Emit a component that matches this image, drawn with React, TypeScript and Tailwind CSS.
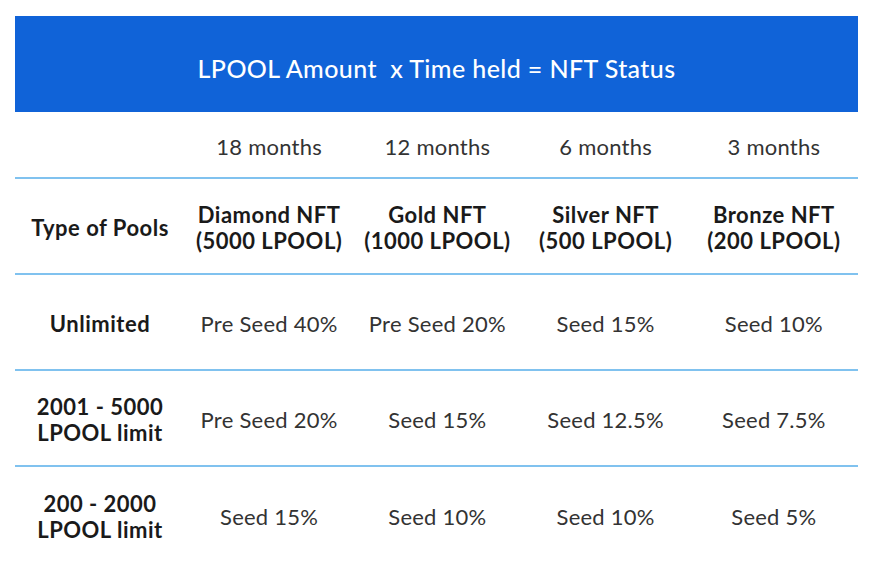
const months = ['18 months', '12 months', '6 months', '3 months'];

const tiers = [
  ['Diamond NFT', '(5000 LPOOL)'],
  ['Gold NFT', '(1000 LPOOL)'],
  ['Silver NFT', '(500 LPOOL)'],
  ['Bronze NFT', '(200 LPOOL)'],
];

const pools: { label: string[]; values: string[] }[] = [
  { label: ['Unlimited'], values: ['Pre Seed 40%', 'Pre Seed 20%', 'Seed 15%', 'Seed 10%'] },
  { label: ['2001 - 5000', 'LPOOL limit'], values: ['Pre Seed 20%', 'Seed 15%', 'Seed 12.5%', 'Seed 7.5%'] },
  { label: ['200 - 2000', 'LPOOL limit'], values: ['Seed 15%', 'Seed 10%', 'Seed 10%', 'Seed 5%'] },
];

function Row({ children, className = '' }: { children: React.ReactNode; className?: string }) {
  return (
    <div className={`grid grid-cols-[170px_repeat(4,1fr)] items-center text-center pt-[3px] ${className}`}>
      {children}
    </div>
  );
}

export default function App() {
  return (
    <div className="w-[878px] h-[572px] bg-white pt-4 pl-[15px] font-['Lato',sans-serif]">
      <div className="w-[843px]">
        <div className="h-[96px] bg-[#1063d8] flex items-center justify-center pt-[10px] text-white text-[25px] font-medium tracking-[0.4px]">
          LPOOL Amount&nbsp; x Time held = NFT Status
        </div>

        <Row className="h-[67px] border-b-2 border-[#80c2ef] text-[22px] tracking-[0.25px] text-[#333]">
          <div />
          {months.map((m) => (
            <div key={m}>{m}</div>
          ))}
        </Row>

        <Row className="h-[96px] border-b-2 border-[#80c2ef] text-[22px] font-bold tracking-[0.5px] text-[#1a1a1a] leading-[26px]">
          <div>Type of Pools</div>
          {tiers.map((t) => (
            <div key={t[0]}>
              <div>{t[0]}</div>
              <div>{t[1]}</div>
            </div>
          ))}
        </Row>

        {pools.map((p, i) => (
          <Row
            key={i}
            className={`h-[96px] text-[22px] ${i < pools.length - 1 ? 'border-b-2 border-[#80c2ef]' : ''}`}
          >
            <div className="font-bold tracking-[0.5px] text-[#1a1a1a] leading-[26px]">
              {p.label.map((l) => (
                <div key={l}>{l}</div>
              ))}
            </div>
            {p.values.map((v, j) => (
              <div key={j} className="text-[#333] tracking-[0.25px]">
                {v}
              </div>
            ))}
          </Row>
        ))}
      </div>
    </div>
  );
}
